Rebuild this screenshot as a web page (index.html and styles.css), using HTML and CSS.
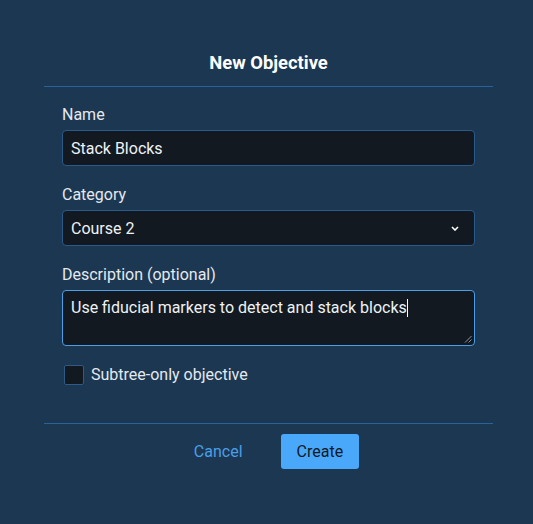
FILE: index.html
```html
<!DOCTYPE html>
<html lang="en">
<head>
<meta charset="utf-8">
<title>New Objective</title>
<link rel="stylesheet" href="styles.css">
</head>
<body>
<div class="dialog">
  <header class="dialog-header">
    <h1 class="dialog-title">New Objective</h1>
  </header>
  <div class="dialog-body">
    <div class="field">
      <label class="field-label">Name</label>
      <div class="control">Stack Blocks</div>
    </div>
    <div class="field">
      <label class="field-label">Category</label>
      <div class="control select">
        <span>Course 2</span>
        <svg class="chevron" width="8" height="5" viewBox="0 0 8 5"><path d="M1 1 L4 4 L7 1" fill="none" stroke="#ffffff" stroke-width="1.6"/></svg>
      </div>
    </div>
    <div class="field">
      <label class="field-label">Description (optional)</label>
      <div class="control textarea">Use fiducial markers to detect and stack blocks<span class="caret"></span>
        <svg class="grip" width="8" height="8" viewBox="0 0 8 8"><path d="M7.5 1 L1 7.5 M7.5 4.5 L4.5 7.5" stroke="#8a949e" stroke-width="1"/></svg>
      </div>
    </div>
    <div class="check-row">
      <span class="checkbox"></span>
      <span class="check-label">Subtree-only objective</span>
    </div>
  </div>
  <footer class="dialog-footer">
    <button class="btn btn-text">Cancel</button>
    <button class="btn btn-primary">Create</button>
  </footer>
</div>
</body>
</html>
```

FILE: styles.css
```css
html, body {
  margin: 0;
  padding: 0;
  background: #1c3752;
  font-family: Roboto, "Liberation Sans", sans-serif;
}

.dialog {
  margin-left: 44px;
  width: 449px;
}

.dialog-header {
  padding-top: 51px;
  padding-bottom: 11px;
  border-bottom: 1px solid #2a639c;
  text-align: center;
}

.dialog-title {
  margin: 0;
  font-size: 18.4px;
  line-height: 24px;
  font-weight: 700;
  color: #ffffff;
}

.dialog-body {
  padding: 18px 18px 38px;
}

.field {
  display: flex;
  flex-direction: column;
  margin-bottom: 19px;
}

.field-label {
  font-size: 16px;
  line-height: 20px;
  color: #e4e9ee;
  margin-bottom: 5px;
}

.control {
  position: relative;
  box-sizing: border-box;
  height: 36px;
  padding: 0 8px;
  display: flex;
  align-items: center;
  background: #121921;
  border: 1px solid #2a5a8c;
  border-radius: 4px;
  font-size: 16px;
  color: #eef2f5;
}

.select {
  justify-content: space-between;
}

.chevron {
  margin-right: 7px;
}

.textarea {
  display: block;
  height: 56px;
  padding-top: 7px;
  line-height: 20px;
  border-color: #4a9fe8;
}

.caret {
  display: inline-block;
  width: 1px;
  height: 18px;
  background: #ffffff;
  vertical-align: -4px;
}

.grip {
  position: absolute;
  right: 2px;
  bottom: 2px;
}

.check-row {
  display: flex;
  align-items: center;
  height: 20px;
  margin-top: 1px;
}

.checkbox {
  box-sizing: border-box;
  width: 20px;
  height: 20px;
  margin-left: 2px;
  margin-right: 7px;
  background: #121921;
  border: 1px solid #2d5a86;
  border-radius: 2px;
}

.check-label {
  font-size: 16px;
  line-height: 20px;
  color: #e4e9ee;
}

.dialog-footer {
  border-top: 1px solid #2a639c;
  padding-top: 10px;
  display: flex;
  justify-content: center;
  gap: 22px;
}

.btn {
  height: 35px;
  padding: 0 16px;
  border: none;
  border-radius: 3px;
  font-family: Roboto, "Liberation Sans", sans-serif;
  font-size: 16px;
  background: transparent;
}

.btn-text {
  color: #4a9fe6;
}

.btn-primary {
  background: #4aa8fa;
  color: #0f1a26;
}
```
